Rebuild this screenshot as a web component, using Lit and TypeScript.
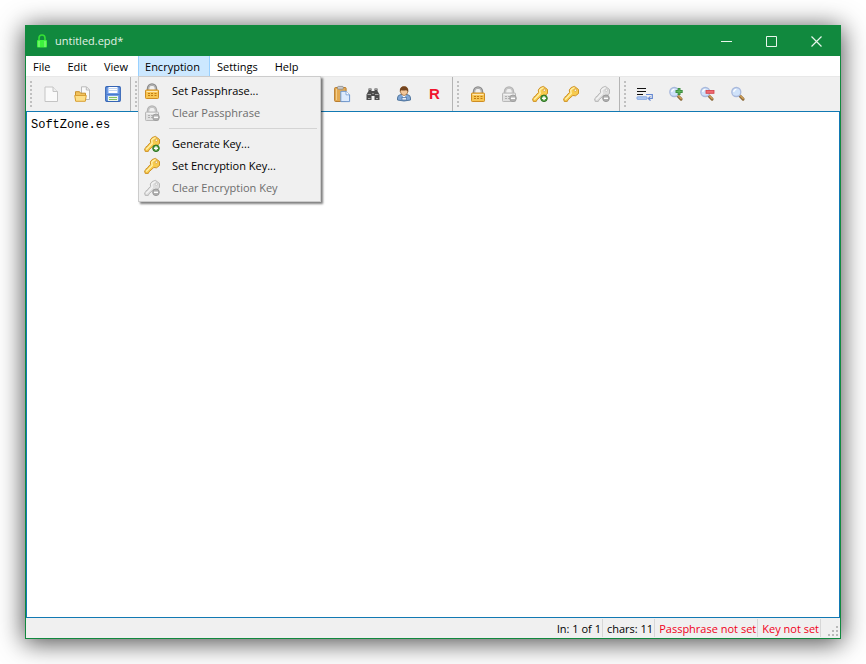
import { LitElement, html, css, svg } from "lit";
import { customElement, property } from "lit/decorators.js";

const lock = (body: string, edge: string, dots: string, shackle: string) => svg`
  <path d="M4 7.500V5.500a4 4 0 0 1 8 0V7.500" fill="none" stroke="${shackle}" stroke-width="2.400"/>
  <path d="M4.500 7V5.300a3.500 3.500 0 0 1 7 0V7" fill="none" stroke="#d4d4d4" stroke-width=".7"/>
  <rect x="1.500" y="7" width="13" height="8.500" rx=".8" fill="${body}" stroke="${edge}"/>
  <path d="M2.500 8.500h11" stroke="#fff" stroke-opacity=".6"/>
  <path d="M4 10.500h2M4 12.500h2M7 10.500h2M7 12.500h2M10.500 10.500h2M10.500 12.500h2" stroke="${dots}" stroke-width="1"/>`;

const key = (light: string, fill: string, edge: string) => svg`
  <path d="M8.200 1.500L11.500 .4 15.500 3.500 15.500 7.500 12.500 9.800 9.800 9.500 5 13.800 4.300 15.400H1.200L.6 12.800 1.800 11.800 2.200 10.600 3.500 10.200 4 8.900 6.600 6.400 6.300 4Z"
    fill="${fill}" stroke="${edge}" stroke-linejoin="round"/>
  <path d="M2.200 13.500L8.200 7.400 7.700 4.300 9.500 2.500 11.500 1.700" fill="none" stroke="${light}" stroke-width="1.400"/>
  <circle cx="12.300" cy="4.200" r="1.200" fill="#fff" stroke="${edge}" stroke-width=".7"/>`;

const badge = (fill: string, edge: string, plus: boolean) => svg`
  <circle cx="12" cy="12.300" r="3.300" fill="${fill}" stroke="${edge}"/>
  <path d="${plus ? "M10 12.300h4M12 10.300v4" : "M10 12.300h4"}" stroke="#fff" stroke-width="1.400"/>`;

const lens = svg`
  <path d="M9.800 9.800l3.300 3.300" stroke="#8c6a3c" stroke-width="3" stroke-linecap="round"/>
  <path d="M10.500 9.900l2.700 2.700" stroke="#dba85a" stroke-width="1.300" stroke-linecap="round"/>
  <circle cx="6.300" cy="6" r="4.500" fill="#cfe2fa" stroke="#a9b9dc" stroke-width="1.300"/>
  <path d="M3.800 6a2.600 2.600 0 0 1 2.600-2.600" fill="none" stroke="#fff" stroke-width="1.300"/>`;

const page = svg`
  <path d="M2 1h8l4.500 4.500V15.500H2Z" fill="#fafafa" stroke="#c4c4c4" stroke-linejoin="round"/>
  <path d="M10 1v4.500h4.500" fill="#eee" stroke="#c4c4c4"/>`;

const icons: Record<string, unknown> = {
  new: page,
  open: svg`
    <path d="M7.500 .8h5l3 3v9.700h-8Z" fill="#fafafa" stroke="#b9b9b9"/>
    <path d="M12.300 1v3h3" fill="none" stroke="#b9b9b9"/>
    <path d="M1.500 14.500V5.700h4l1 1.500h5v7.300Z" fill="#f1c25c" stroke="#c9912a"/>
    <path d="M.7 9.500h11.600l-1 5.800H1.700Z" fill="#fddf88" stroke="#d9a035"/>`,
  save: svg`
    <rect x=".7" y=".7" width="14.600" height="14.600" rx="1" fill="#6f9ce6" stroke="#3565b5" stroke-width="1.200"/>
    <rect x="3.500" y="1" width="9" height="6" fill="#fff"/>
    <path d="M4 2.500h8M4 4.500h8" stroke="#c3d5f0"/>
    <path d="M1.500 8.500h13" stroke="#4a7bcb"/>
    <rect x="3" y="10" width="10" height="5" fill="#eef6ea"/>
    <path d="M4 11.500h8M4 13.500h8" stroke="#7fc065"/>`,
  close: svg`${page}<path d="M8 8l6 6M14 8l-6 6" stroke="#d33" stroke-width="2"/>`,
  undo: svg`<path d="M3 6h7a4 4 0 0 1 0 8H6M6 2L2 6l4 4" fill="none" stroke="#5b8ad0" stroke-width="2"/>`,
  redo: svg`<path d="M13 6H6a4 4 0 0 0 0 8h4M10 2l4 4-4 4" fill="none" stroke="#5b8ad0" stroke-width="2"/>`,
  cut: svg`<path d="M4 1l6 10M12 1L6 11" stroke="#777" stroke-width="1.500"/><circle cx="4.500" cy="12.500" r="2" fill="none" stroke="#36c"/><circle cx="11.500" cy="12.500" r="2" fill="none" stroke="#36c"/>`,
  copy: svg`<path d="M1.500 1.500h8v10h-8Z" fill="#fff" stroke="#89a"/><path d="M6.500 4.500h8v10h-8Z" fill="#e4effc" stroke="#58a"/>`,
  print: svg`<path d="M4 1h8v5H4Z" fill="#fff" stroke="#888"/><path d="M1.500 6h13v6h-13Z" fill="#ccc" stroke="#777"/><path d="M4 10h8v5H4Z" fill="#fff" stroke="#888"/>`,
  paste: svg`
    <rect x=".6" y="1.500" width="11.500" height="14" rx="1" fill="#e3a950" stroke="#b97d2f"/>
    <path d="M2.500 3v11" stroke="#f2cd8c"/>
    <rect x="3.500" y=".4" width="5.800" height="2.800" rx="1" fill="#ccc" stroke="#888" stroke-width=".8"/>
    <path d="M6.800 5.300h5.200l3.600 3.500v6.800H6.800Z" fill="#dceafc" stroke="#6d97cf"/>
    <path d="M12 5.300v3.500h3.600" fill="#fff" stroke="#6d97cf" stroke-width=".8"/>`,
  find: svg`
    <path d="M3.500 2.500h3v2.500h3V2.500h3v2.500l2 3.500v5.500H9.500v-4h-3v4h-5V8.500l2-3.500Z" fill="#4a4a4a"/>
    <path d="M3.500 3.500h3M9.500 3.500h3" stroke="#999"/>
    <path d="M2.500 8.500h3.500M10 8.500h3.500M3 12.500h2.500M11 12.500h2" stroke="#a5a5a5"/>
    <path d="M7 7.500h2" stroke="#888"/>`,
  user: svg`
    <path d="M1.500 14V12q0-3 3.500-3.500h6q3.500 .5 3.500 3.500v2q-6.500 2-13 0Z" fill="#7fa6d6" stroke="#55799f"/>
    <path d="M6 9l2 3 2-3Z" fill="#fff"/>
    <rect x="6" y="11.500" width="4.500" height="2.500" fill="#e3ecf7" stroke="#4c71a3" stroke-width=".7"/>
    <path d="M4.200 5.500q0-5 3.900-5t3.900 5Q11 9.500 8.100 9.500T4.200 5.500Z" fill="#f2c79b" stroke="#8d5a2e" stroke-width=".7"/>
    <path d="M4 6Q3.200 .5 8 .5t4 5.500q-.8-1.500-2-1.800-2.500 .6-4.500 0Q4.500 4.500 4 6Z" fill="#74451f"/>`,
  lock: lock("#f7c552", "#cf8d22", "#c27d12", "#8b8b8b"),
  unlock: svg`${lock("#e0e0e0", "#b8b8b8", "#b0b0b0", "#b4b4b4")}${badge("#b4b4b4", "#a0a0a0", false)}`,
  keyAdd: svg`${key("#fff0a8", "#f7cb4d", "#cf9227")}${badge("#4c9a3a", "#2f7424", true)}`,
  key: key("#fff0a8", "#f7cb4d", "#cf9227"),
  keyClear: svg`${key("#f4f4f4", "#dedede", "#b8b8b8")}${badge("#b0b0b0", "#9a9a9a", false)}`,
  wrap: svg`
    <path d="M0 2.500h9M0 5.500h9M0 8.500h6" stroke="#111" stroke-width="1"/>
    <rect x="0" y="10.800" width="10" height="2.500" rx=".5" fill="#b5cdf5" stroke="#6f97dd" stroke-width=".8"/>
    <path d="M9 8.500h6.300v4h-3.500M13.500 10.300l-2.200 2.200 2.200 2.200" fill="none" stroke="#6488d2" stroke-width="1.200"/>`,
  zoomIn: svg`${lens}<path d="M7.500 5.500h7.200M11.100 1.900v7.200" stroke="#3c8f40" stroke-width="2.800"/><path d="M8.500 5.500h5.200M11.100 2.900v5.200" stroke="#62b75c"/>`,
  zoomOut: svg`${lens}<rect x="7" y="4.500" width="8" height="2.800" fill="#ee6a70" stroke="#d23b45" stroke-width=".8"/>`,
  zoom: lens,
};

@customElement("app-icon")
class AppIcon extends LitElement {
  @property() name = "";
  static styles = css`
    :host { display: block; width: 16px; height: 16px; }
    svg { display: block; width: 100%; height: 100%; overflow: visible; }
  `;
  render() {
    return html`<svg viewBox="0 0 16 16" aria-hidden="true">${icons[this.name]}</svg>`;
  }
}

const toolGroups = [
  [["new", "New"], ["open", "Open"], ["save", "Save"]],
  [["close", "Close"], ["undo", "Undo"], ["redo", "Redo"], ["cut", "Cut"], ["copy", "Copy"], ["print", "Print"],
   ["paste", "Paste"], ["find", "Find"], ["user", "Replace"], ["read", "Read only"]],
  [["lock", "Set Passphrase"], ["unlock", "Clear Passphrase"], ["keyAdd", "Generate Key"], ["key", "Set Encryption Key"], ["keyClear", "Clear Encryption Key"]],
  [["wrap", "Word wrap"], ["zoomIn", "Zoom in"], ["zoomOut", "Zoom out"], ["zoom", "Reset zoom"]],
];

const disabledTools = ["unlock", "keyClear"];

const encryptionMenu = [
  { icon: "lock", label: "Set Passphrase..." },
  { icon: "unlock", label: "Clear Passphrase", off: true },
  null,
  { icon: "keyAdd", label: "Generate Key..." },
  { icon: "key", label: "Set Encryption Key..." },
  { icon: "keyClear", label: "Clear Encryption Key", off: true },
];

@customElement("app-root")
class AppRoot extends LitElement {
  static styles = css`
    :host {
      display: flex;
      box-sizing: border-box;
      min-height: 100vh;
      padding: 25px;
      background: #fff;
      color: #000;
      font: 11px/20px "Open Sans", "Noto Sans", sans-serif;
    }
    button, textarea { font: inherit; color: inherit; margin: 0; padding: 0; border: 0; background: none; border-radius: 0; }
    .window {
      flex: 1;
      min-width: 0;
      display: flex;
      flex-direction: column;
      border: 1px solid #11893e;
      background: #f0f0f0;
      box-shadow: 0 3px 24px 1px rgba(0, 0, 0, 0.7);
    }
    .title { display: flex; align-items: center; height: 30px; padding-right: 1px; background: #11893e; color: #e3f1e6; }
    .title .logo { width: 12px; height: 14px; margin: 0 7px 0 10px; }
    .title h1 { flex: 1; margin: 0; font-size: 11px; font-weight: 400; }
    .title button { display: grid; place-items: center; width: 45px; height: 30px; }
    .title button svg { width: 11px; height: 11px; stroke: #e9f6ec; fill: none; }
    .menubar { display: flex; height: 20px; background: #fff; border-bottom: 1px solid #e8e8e8; }
    .entry { position: relative; display: flex; }
    .entry > button { height: 20px; padding: 0 9px 0 7px; border: solid transparent; border-width: 0 1px 0 0; line-height: 21px; white-space: nowrap; }
    .entry > .open { background: #cce8ff; border-color: #99d1ff; box-shadow: inset 1px 0 #99d1ff; }
    .popup {
      position: absolute;
      z-index: 2;
      top: 20px;
      left: 0;
      box-sizing: border-box;
      width: 183px;
      padding: 3px 2px 2px;
      border: 1px solid #ccc;
      background: #f0f0f0;
      box-shadow: 2px 2px 2px rgba(0, 0, 0, 0.5);
    }
    .popup button { display: flex; align-items: center; gap: 12px; width: 100%; height: 22px; padding-left: 3px; text-align: left; white-space: nowrap; }
    .popup button:disabled { color: #6d6d6d; }
    .popup hr { height: 1px; margin: 4px 1px 4px 28px; border: 0; background: #d4d4d4; }
    .toolbar { display: flex; height: 34px; overflow: hidden; }
    .group { display: flex; align-items: center; box-sizing: border-box; padding: 0 2px 0 0; border-right: 1px solid #b4b4b4; }
    .group:last-child { border-right-color: transparent; }
    .grip { width: 2px; height: 26px; margin: 0 3px 0 4px; background: repeating-linear-gradient(#c0c0c0 0 2px, transparent 2px 4px); }
    .tool { display: grid; place-items: center; width: 31px; height: 32px; }
    .letter { color: #f0142d; font: 700 15px/16px "Liberation Sans", sans-serif; }
    textarea {
      flex: 1;
      display: block;
      box-sizing: border-box;
      width: 100%;
      min-height: 120px;
      padding: 6px 4px;
      border: 1px solid #1279b3;
      background: #fff;
      outline: 0;
      resize: none;
      font: 12px/14px "Liberation Mono", monospace;
    }
    .status { display: flex; justify-content: flex-end; height: 20px; }
    .status span { padding: 0 1px 0 4px; margin: 1px 0; height: 18px; line-height: 20px; border-right: 1px solid #d7d7d7; white-space: nowrap; }
    .status .warn { color: #f00020; }
    .sizer { width: 10px; height: 10px; margin: 8px 2px 0 7px; fill: #b9b9b9; }
  `;

  private menu(label: string) {
    if (label !== "Encryption") return html`<div class="entry"><button>${label}</button></div>`;
    return html`
      <div class="entry">
        <button class="open" aria-haspopup="menu" aria-expanded="true">${label}</button>
        <div class="popup" role="menu" aria-label=${label}>
          ${encryptionMenu.map((item) =>
            item
              ? html`<button role="menuitem" ?disabled=${item.off}><app-icon name=${item.icon}></app-icon>${item.label}</button>`
              : html`<hr />`
          )}
        </div>
      </div>`;
  }

  render() {
    return html`
      <main class="window">
        <header class="title">
          <svg class="logo" viewBox="0 0 12 14" aria-hidden="true">
            <path d="M3 7V4a3 3 0 0 1 6 0v3" fill="none" stroke="#35e035" stroke-width="1.600" />
            <rect x="1" y="6" width="10" height="7.500" rx="1" fill="#3df23d" />
            <path d="M3 7v6M9 7v6" stroke="#9dfb8f" />
          </svg>
          <h1>untitled.epd*</h1>
          <button aria-label="Minimize"><svg viewBox="0 0 11 11"><path d="M0 5.500h11" /></svg></button>
          <button aria-label="Maximize"><svg viewBox="0 0 11 11"><path d="M.5 .5h10v10H.5Z" /></svg></button>
          <button aria-label="Close"><svg viewBox="0 0 11 11"><path d="M.5 .5l10 10M10.500 .5l-10 10" stroke-width="1.200" /></svg></button>
        </header>
        <nav class="menubar">${["File", "Edit", "View", "Encryption", "Settings", "Help"].map((l) => this.menu(l))}</nav>
        <div class="toolbar" role="toolbar" aria-label="Tools">
          ${toolGroups.map(
            (group) => html`
              <div class="group">
                <i class="grip"></i>
                ${group.map(
                  ([icon, label]) => html`
                    <button class="tool" title=${label} aria-label=${label} ?disabled=${disabledTools.includes(icon)}>
                      ${icon === "read" ? html`<b class="letter">R</b>` : html`<app-icon name=${icon}></app-icon>`}
                    </button>`
                )}
              </div>`
          )}
        </div>
        <textarea aria-label="Document text" spellcheck="false" .value=${"SoftZone.es"}></textarea>
        <footer class="status">
          <span>ln: 1 of 1</span><span>chars: 11</span><span class="warn">Passphrase not set</span><span class="warn">Key not set</span>
          <svg class="sizer" viewBox="0 0 10 10" aria-hidden="true">
            <path d="M8 0h2v2H8ZM4 4h2v2H4ZM8 4h2v2H8ZM0 8h2v2H0ZM4 8h2v2H4ZM8 8h2v2H8Z" />
          </svg>
        </footer>
      </main>`;
  }
}
